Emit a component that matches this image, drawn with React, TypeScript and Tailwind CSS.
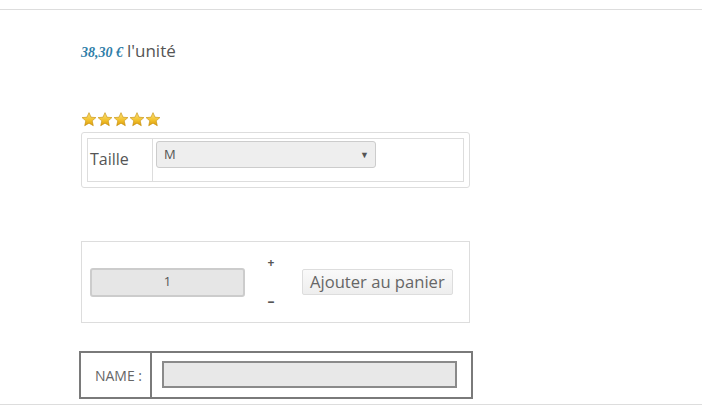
import React from "react";

function Star() {
  return (
    <svg width="16" height="15" viewBox="0 0 24 23">
      <defs>
        <linearGradient id="sg" x1="0" y1="0" x2="0" y2="1">
          <stop offset="0" stopColor="#fbe27a" />
          <stop offset="0.6" stopColor="#f2c02a" />
          <stop offset="1" stopColor="#d99a0e" />
        </linearGradient>
      </defs>
      <path
        d="M12 1 L15.1 8 L22.6 8.6 L16.9 13.6 L18.6 21 L12 17.1 L5.4 21 L7.1 13.6 L1.4 8.6 L8.9 8 Z"
        fill="url(#sg)"
        stroke="#c8920c"
        strokeWidth="1"
        strokeLinejoin="round"
      />
    </svg>
  );
}

export default function App() {
  const sans = { fontFamily: '"Open Sans", "Liberation Sans", sans-serif' };
  return (
    <div className="w-[702px] h-[415px] bg-white overflow-hidden" style={sans}>
      <div className="h-[9px]" />
      <div className="border-t border-[#dddddd]" />
      <div className="pl-[81px]">
        <div className="mt-[28px] flex items-baseline h-[20px]">
          <span
            className="italic font-bold text-[14px] text-[#2f7ea8]"
            style={{ fontFamily: '"Liberation Serif", "DejaVu Serif", serif' }}
          >
            38,30 €
          </span>
          <span className="ml-[4px] text-[17px] text-[#555555]">l'unité</span>
        </div>
        <div className="mt-[54px] flex gap-0">
          <Star />
          <Star />
          <Star />
          <Star />
          <Star />
        </div>
        <div className="mt-[5px] w-[389px] h-[56px] border border-[#dddddd] rounded-[3px] p-[5px]">
          <div className="flex h-[44px] border border-[#dddddd]">
            <div className="w-[65px] border-r border-[#dddddd] flex items-center pl-[2px] pb-[2px] text-[16px] text-[#555555]">
              Taille
            </div>
            <div className="pl-[3px] pt-[2px]">
              <div className="w-[220px] h-[27px] bg-[#eeeeee] border border-[#cccccc] rounded-[3px] flex items-center justify-between pl-[7px] pr-[6px]">
                <span className="text-[13px] text-[#555555]">M</span>
                <span className="text-[9px] text-[#555555]">▼</span>
              </div>
            </div>
          </div>
        </div>
        <div className="mt-[53px] w-[389px] h-[82px] border border-[#dddddd] flex items-center pl-[8px]">
          <div className="w-[155px] h-[29px] bg-[#e6e6e6] border-2 border-[#cccccc] rounded-[3px] flex items-center justify-center text-[13px] text-[#555555]">
            1
          </div>
          <div className="ml-[21px] w-[10px] h-[52px] flex flex-col justify-between items-center text-[#555555]">
            <span className="text-[12px] leading-[14px] font-bold">+</span>
            <span className="text-[14px] leading-[14px] font-bold">–</span>
          </div>
          <div className="ml-[26px] h-[26px] px-[7px] bg-gradient-to-b from-[#fafafa] to-[#eeeeee] border border-[#dddddd] rounded-[2px] flex items-center text-[16.6px] text-[#666666]">
            Ajouter au panier
          </div>
        </div>
        <div className="mt-[28px] -ml-[2px] w-[394px] h-[48px] border-2 border-[#7a7a7a] flex">
          <div className="w-[71px] border-r-2 border-[#7a7a7a] flex items-center justify-center pl-[6px] text-[14px] text-[#666666]">
            NAME :
          </div>
          <div className="pl-[10px] pt-[8px]">
            <div className="w-[295px] h-[27px] bg-[#e8e8e8] border-2 border-[#8a8a8a]" />
          </div>
        </div>
      </div>
      <div className="mt-[5px] border-t border-[#dddddd]" />
    </div>
  );
}
